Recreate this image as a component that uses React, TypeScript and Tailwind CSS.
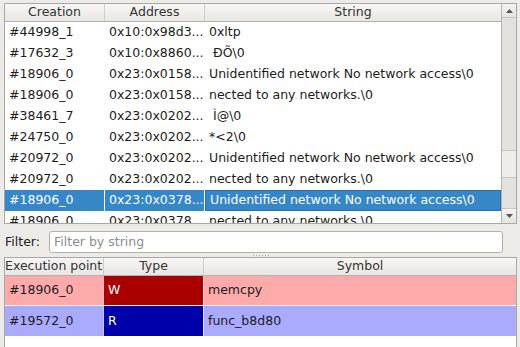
import React from "react";

const rows: [string, string, string][] = [
  ["#44998_1", "0x10:0x98d3...", "0xltp"],
  ["#17632_3", "0x10:0x8860...", " ÐÕ\\0"],
  ["#18906_0", "0x23:0x0158...", "Unidentified network No network access\\0"],
  ["#18906_0", "0x23:0x0158...", "nected to any networks.\\0"],
  ["#38461_7", "0x23:0x0202...", " Ì@\\0"],
  ["#24750_0", "0x23:0x0202...", "*<2\\0"],
  ["#20972_0", "0x23:0x0202...", "Unidentified network No network access\\0"],
  ["#20972_0", "0x23:0x0202...", "nected to any networks.\\0"],
  ["#18906_0", "0x23:0x0378...", "Unidentified network No network access\\0"],
  ["#18906_0", "0x23:0x0378...", "nected to any networks.\\0"],
];

function Tri({ down }: { down?: boolean }) {
  return (
    <svg width="7" height="4" viewBox="0 0 7 4">
      {down ? <polygon points="0,0 7,0 3.5,4" fill="#555" /> : <polygon points="0,4 7,4 3.5,0" fill="#555" />}
    </svg>
  );
}

export default function App() {
  return (
    <div className="w-[520px] h-[347px] bg-[#edebe8] overflow-hidden pt-[3px] pl-[4px] pr-[3px] font-['DejaVu_Sans',sans-serif] text-[12.5px] text-[#1c1c1c] leading-none">
      {/* top table */}
      <div className="h-[221px] border border-[#aaa8a4] flex bg-white">
        <div className="flex-1 flex flex-col overflow-hidden">
          <div className="h-[18px] shrink-0 flex border-b border-[#b4b2ae] bg-gradient-to-b from-[#f7f6f4] to-[#e9e7e3] text-[#333]">
            <div className="w-[100px] border-r border-[#cfcdc9] flex items-center justify-center">Creation</div>
            <div className="w-[100px] border-r border-[#cfcdc9] flex items-center justify-center">Address</div>
            <div className="flex-1 flex items-center justify-center">String</div>
          </div>
          <div className="flex flex-col">
            {rows.map((r, i) => {
              const sel = i === 8;
              return (
                <div key={i} className={`h-[21px] shrink-0 flex ${sel ? "text-white" : ""}`}>
                  <div className={`w-[100px] flex items-center pl-[4px] ${sel ? "bg-[#3587c7] border-r border-white" : ""}`}>{r[0]}</div>
                  <div className={`w-[100px] flex items-center pl-[4px] whitespace-nowrap overflow-hidden ${sel ? "bg-[#3587c7] border-r border-white" : ""}`}>{r[1]}</div>
                  <div className={`flex-1 flex items-center pl-[4px] whitespace-pre ${sel ? "bg-[#3587c7] border border-[#2a6ea8]" : ""}`}>{r[2]}</div>
                </div>
              );
            })}
          </div>
        </div>
        <div className="w-[15px] shrink-0 border-l border-[#b4b2ae] flex flex-col bg-[#e3e1de]">
          <div className="h-[14px] shrink-0 flex items-center justify-center border-b border-[#c8c6c2] bg-gradient-to-b from-[#f4f3f1] to-[#e6e4e1]">
            <Tri />
          </div>
          <div className="h-[132px] shrink-0" />
          <div className="h-[28px] shrink-0 bg-[#eeedeb] border-y border-[#c8c6c2]" />
          <div className="flex-1" />
          <div className="h-[15px] shrink-0 flex items-center justify-center border-t border-[#c8c6c2] bg-gradient-to-b from-[#f4f3f1] to-[#e6e4e1]">
            <Tri down />
          </div>
        </div>
      </div>
      {/* filter */}
      <div className="flex items-center mt-[7px] h-[22px]">
        <div className="w-[45px] pl-[1px] text-[#222]">Filter:</div>
        <div className="w-[454px] h-[22px] border border-[#b3b1ad] rounded-[3px] bg-white flex items-center pl-[4px] text-[#8c8c8c]">
          Filter by string
        </div>
      </div>
      {/* splitter */}
      <div className="h-[4px] flex items-center justify-center gap-[2px]">
        {[0, 1, 2, 3, 4, 5].map((d) => (
          <div key={d} className="w-[1px] h-[1px] bg-[#a8a6a2]" />
        ))}
      </div>
      {/* bottom table */}
      <div className="h-[100px] border border-[#aaa8a4] border-b-0 bg-white flex flex-col">
        <div className="h-[18px] shrink-0 flex border-b border-[#b4b2ae] bg-gradient-to-b from-[#f7f6f4] to-[#e9e7e3] text-[#333]">
          <div className="w-[99px] border-r border-[#cfcdc9] flex items-center whitespace-nowrap overflow-hidden">Execution point</div>
          <div className="w-[100px] border-r border-[#cfcdc9] flex items-center justify-center">Type</div>
          <div className="flex-1 flex items-center justify-center">Symbol</div>
        </div>
        <div className="h-[30px] shrink-0 flex bg-[#ffaaaa] border-b border-[#f4eeee]">
          <div className="w-[99px] border-r border-[#c9c7c4] flex items-center pl-[4px]">#18906_0</div>
          <div className="w-[100px] bg-[#aa0000] border-r border-[#e8e6e4] flex items-center pl-[4px] text-white">W</div>
          <div className="flex-1 flex items-center pl-[4px]">memcpy</div>
        </div>
        <div className="h-[30px] shrink-0 flex bg-[#aaaaff]">
          <div className="w-[99px] border-r border-[#c9c7c4] flex items-center pl-[4px]">#19572_0</div>
          <div className="w-[100px] bg-[#0000aa] border-r border-[#e8e6e4] flex items-center pl-[4px] text-white">R</div>
          <div className="flex-1 flex items-center pl-[4px]">func_b8d80</div>
        </div>
      </div>
    </div>
  );
}
